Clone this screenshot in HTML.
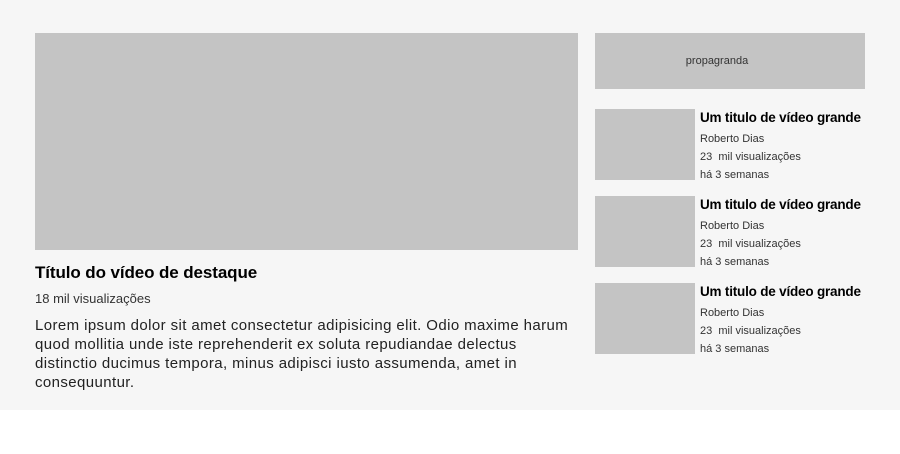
<!DOCTYPE html>
<html><head><meta charset="utf-8"><style>
*{margin:0;padding:0;box-sizing:border-box}
body{width:900px;height:454px;background:#fff;font-family:"Liberation Sans",sans-serif;color:#222;overflow:hidden;position:relative}
.bg{position:absolute;left:0;top:0;width:900px;height:410px;background:#f6f6f6}
.g{position:absolute;background:#c4c4c4}
.t{position:absolute;white-space:nowrap}
</style></head><body>
<div class="bg"></div>
<div class="g" style="left:35px;top:33px;width:543px;height:217px"></div>
<div class="g" style="left:595px;top:33px;width:270px;height:56px"></div>
<div class="t" style="left:582px;width:270px;text-align:center;top:55px;font-size:11px;color:#333">propagranda</div>

<div class="t" style="left:35px;top:263px;font-size:17px;font-weight:bold;color:#000;letter-spacing:-0.1px">Título do vídeo de destaque</div>
<div class="t" style="left:35px;top:291px;font-size:13px;color:#333">18 mil visualizações</div>
<div class="t" style="left:35px;top:316px;font-size:15px;line-height:19px;color:#222;letter-spacing:0.4px">Lorem ipsum dolor sit amet consectetur adipisicing elit. Odio maxime harum<br>quod mollitia unde iste reprehenderit ex soluta repudiandae delectus<br>distinctio ducimus tempora, minus adipisci iusto assumenda, amet in<br>consequuntur.</div>

<div class="g" style="left:595px;top:109px;width:100px;height:71px"></div>
<div class="t" style="left:700px;top:110px;font-size:13.5px;font-weight:bold;color:#000;letter-spacing:-0.2px">Um titulo de vídeo grande</div>
<div class="t" style="left:700px;top:130px;font-size:11px;line-height:18px;color:#333">Roberto Dias<br>23&nbsp; mil visualizações<br>há 3 semanas</div>

<div class="g" style="left:595px;top:196px;width:100px;height:71px"></div>
<div class="t" style="left:700px;top:197px;font-size:13.5px;font-weight:bold;color:#000;letter-spacing:-0.2px">Um titulo de vídeo grande</div>
<div class="t" style="left:700px;top:217px;font-size:11px;line-height:18px;color:#333">Roberto Dias<br>23&nbsp; mil visualizações<br>há 3 semanas</div>

<div class="g" style="left:595px;top:283px;width:100px;height:71px"></div>
<div class="t" style="left:700px;top:284px;font-size:13.5px;font-weight:bold;color:#000;letter-spacing:-0.2px">Um titulo de vídeo grande</div>
<div class="t" style="left:700px;top:304px;font-size:11px;line-height:18px;color:#333">Roberto Dias<br>23&nbsp; mil visualizações<br>há 3 semanas</div>
</body></html>
